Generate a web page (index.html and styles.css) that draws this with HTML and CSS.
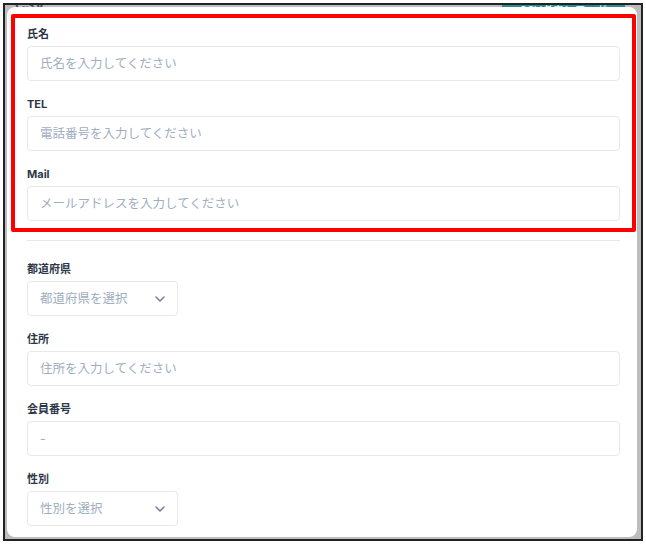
FILE: index.html
```html
<!DOCTYPE html>
<html lang="ja">
<head>
  <meta charset="UTF-8" />
  <meta name="viewport" content="width=device-width, initial-scale=1.0"/>
  <title>会員情報</title>
  <link rel="stylesheet" href="styles.css">
</head>
<body>

<div class="frame">
  <div class="page">
    <span class="page-title">CSV</span>
    <span class="page-button">CSVダウンロード</span>
  </div>

  <div class="modal">
    <div class="group-marked">
      <div class="field">
        <label>氏名</label>
        <div class="input placeholder">氏名を入力してください</div>
      </div>
      <div class="field">
        <label>TEL</label>
        <div class="input placeholder">電話番号を入力してください</div>
      </div>
      <div class="field">
        <label>Mail</label>
        <div class="input placeholder">メールアドレスを入力してください</div>
      </div>
    </div>

    <hr class="divider">

    <div class="field">
      <label>都道府県</label>
      <div class="input select placeholder">
        都道府県を選択
        <svg class="chevron" width="10" height="6" viewBox="0 0 10 6"><path d="M1 1l4 4 4-4" fill="none" stroke="#718096" stroke-width="1.5" stroke-linecap="round" stroke-linejoin="round"/></svg>
      </div>
    </div>
    <div class="field">
      <label>住所</label>
      <div class="input placeholder">住所を入力してください</div>
    </div>
    <div class="field">
      <label>会員番号</label>
      <div class="input placeholder">-</div>
    </div>
    <div class="field">
      <label>性別</label>
      <div class="input select placeholder">
        性別を選択
        <svg class="chevron" width="10" height="6" viewBox="0 0 10 6"><path d="M1 1l4 4 4-4" fill="none" stroke="#718096" stroke-width="1.5" stroke-linecap="round" stroke-linejoin="round"/></svg>
      </div>
    </div>
  </div>
</div>

</body>
</html>
```

FILE: styles.css
```css
body {
  margin: 0;
  background: #fff;
  font-family: Inter, "Noto Sans CJK JP", sans-serif;
  color: #2d3748;
}

.frame {
  position: relative;
  width: 636px;
  height: 534px;
  margin: 3px;
  border: 2px solid #222;
  background: #bdbdbd;
  overflow: hidden;
}

.page {
  display: flex;
  justify-content: space-between;
  align-items: flex-start;
  padding: 0 16px 0 10px;
  margin-top: -10px;
}

.page-title {
  font-size: 14px;
  font-weight: bold;
  color: #555;
  line-height: 20px;
}

.page-button {
  width: 123px;
  height: 30px;
  background: #2b8a8a;
  color: #cfe;
  font-size: 11px;
  text-align: center;
  line-height: 30px;
}

.modal {
  position: absolute;
  left: 2px;
  top: 2px;
  width: 593px;
  height: 512px;
  padding: 7px 17px 11px 20px;
  background: #fff;
  border-radius: 8px;
}

.group-marked {
  margin: 0 -16px;
  padding: 8px 12px 7px;
  border: 4px solid #ff0000;
  border-radius: 2px;
}

.field {
  margin-bottom: 15px;
}

.group-marked .field:last-child {
  margin-bottom: 0;
}

.field label {
  display: block;
  font-size: 11px;
  font-weight: bold;
  line-height: 16px;
  margin-bottom: 4px;
}

.input {
  box-sizing: border-box;
  height: 35px;
  padding: 0 12px;
  border: 1px solid #e6e8eb;
  border-radius: 4px;
  font-size: 12.5px;
  line-height: 33px;
}

.placeholder {
  color: #a0aec0;
}

.select {
  width: 151px;
  display: flex;
  justify-content: space-between;
  align-items: center;
}

.divider {
  border: none;
  border-top: 1px solid #e2e8f0;
  margin: 8px 0 20px;
}
```
